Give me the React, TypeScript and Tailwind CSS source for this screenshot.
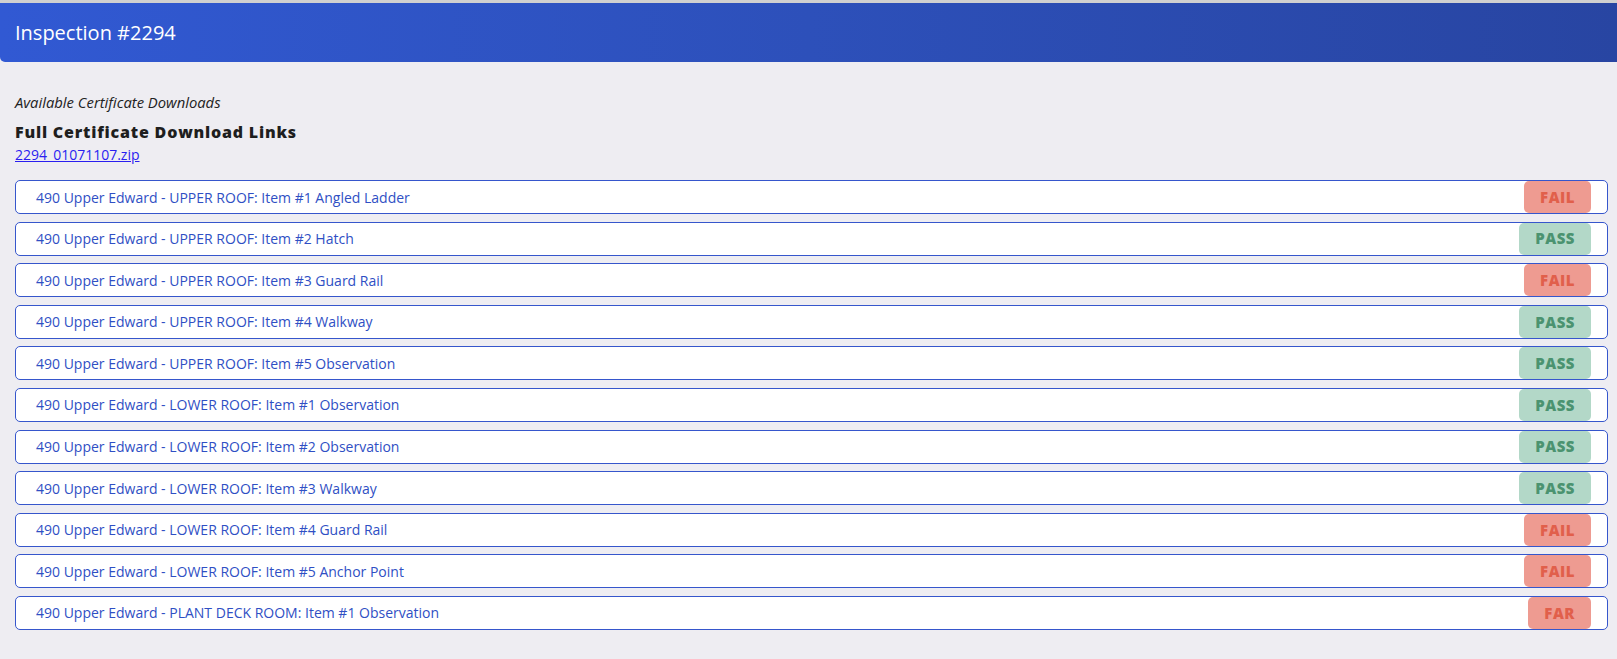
import React from 'react'

type Result = 'FAIL' | 'PASS' | 'FAR'

// inspection items, straight from the report
const items: { label: string; result: Result }[] = [
  { label: '490 Upper Edward - UPPER ROOF: Item #1 Angled Ladder', result: 'FAIL' },
  { label: '490 Upper Edward - UPPER ROOF: Item #2 Hatch', result: 'PASS' },
  { label: '490 Upper Edward - UPPER ROOF: Item #3 Guard Rail', result: 'FAIL' },
  { label: '490 Upper Edward - UPPER ROOF: Item #4 Walkway', result: 'PASS' },
  { label: '490 Upper Edward - UPPER ROOF: Item #5 Observation', result: 'PASS' },
  { label: '490 Upper Edward - LOWER ROOF: Item #1 Observation', result: 'PASS' },
  { label: '490 Upper Edward - LOWER ROOF: Item #2 Observation', result: 'PASS' },
  { label: '490 Upper Edward - LOWER ROOF: Item #3 Walkway', result: 'PASS' },
  { label: '490 Upper Edward - LOWER ROOF: Item #4 Guard Rail', result: 'FAIL' },
  { label: '490 Upper Edward - LOWER ROOF: Item #5 Anchor Point', result: 'FAIL' },
  { label: '490 Upper Edward - PLANT DECK ROOM: Item #1 Observation', result: 'FAR' },
]

function Badge({ result }: { result: Result }) {
  const pass = result === 'PASS'
  return (
    <span
      className={`h-full flex items-center px-4 rounded-[5px] text-[15px] font-extrabold tracking-[0.5px] ${
        pass ? 'bg-[#b3d8c8] text-[#4b9370]' : 'bg-[#ee9b91] text-[#e15f4b]'
      }`}
    >
      {result}
    </span>
  )
}

export default function App() {
  return (
    <div
      className="min-h-[659px] bg-[#eeedf2] text-[#222]"
      style={{ fontFamily: '"Open Sans", "Liberation Sans", sans-serif' }}
    >
      <div className="h-[3px] bg-[#d0d0d0]" />
      <div className="h-[59px] flex items-center px-[15px] rounded-bl-[5px] bg-gradient-to-r from-[#3159d3] via-[#2d50ba] to-[#2845a2]">
        <h1 className="text-white text-[20px]">Inspection #2294</h1>
      </div>

      <div className="pl-[15px] pr-[9px]">
        <p className="mt-[31px] text-[14.8px] leading-[19px] italic">Available Certificate Downloads</p>
        <h2 className="mt-[10px] text-[16px] leading-[21px] font-extrabold tracking-[0.8px] text-[#1e1e1e]">
          Full Certificate Download Links
        </h2>
        <a href="#" className="block mt-[2px] text-[14px] leading-[19px] text-[#2a1ef0] underline">
          2294_01071107.zip
        </a>

        <div className="mt-[16px] flex flex-col gap-[7.6px]">
          {items.map((it, i) => (
            <div
              key={i}
              className="h-[34px] flex items-center justify-between bg-white border border-[#3656cc] rounded-[5px] pl-5 pr-4"
            >
              <span className="text-[14px] text-[#2f4fc4]">{it.label}</span>
              <Badge result={it.result} />
            </div>
          ))}
        </div>
      </div>
    </div>
  )
}
